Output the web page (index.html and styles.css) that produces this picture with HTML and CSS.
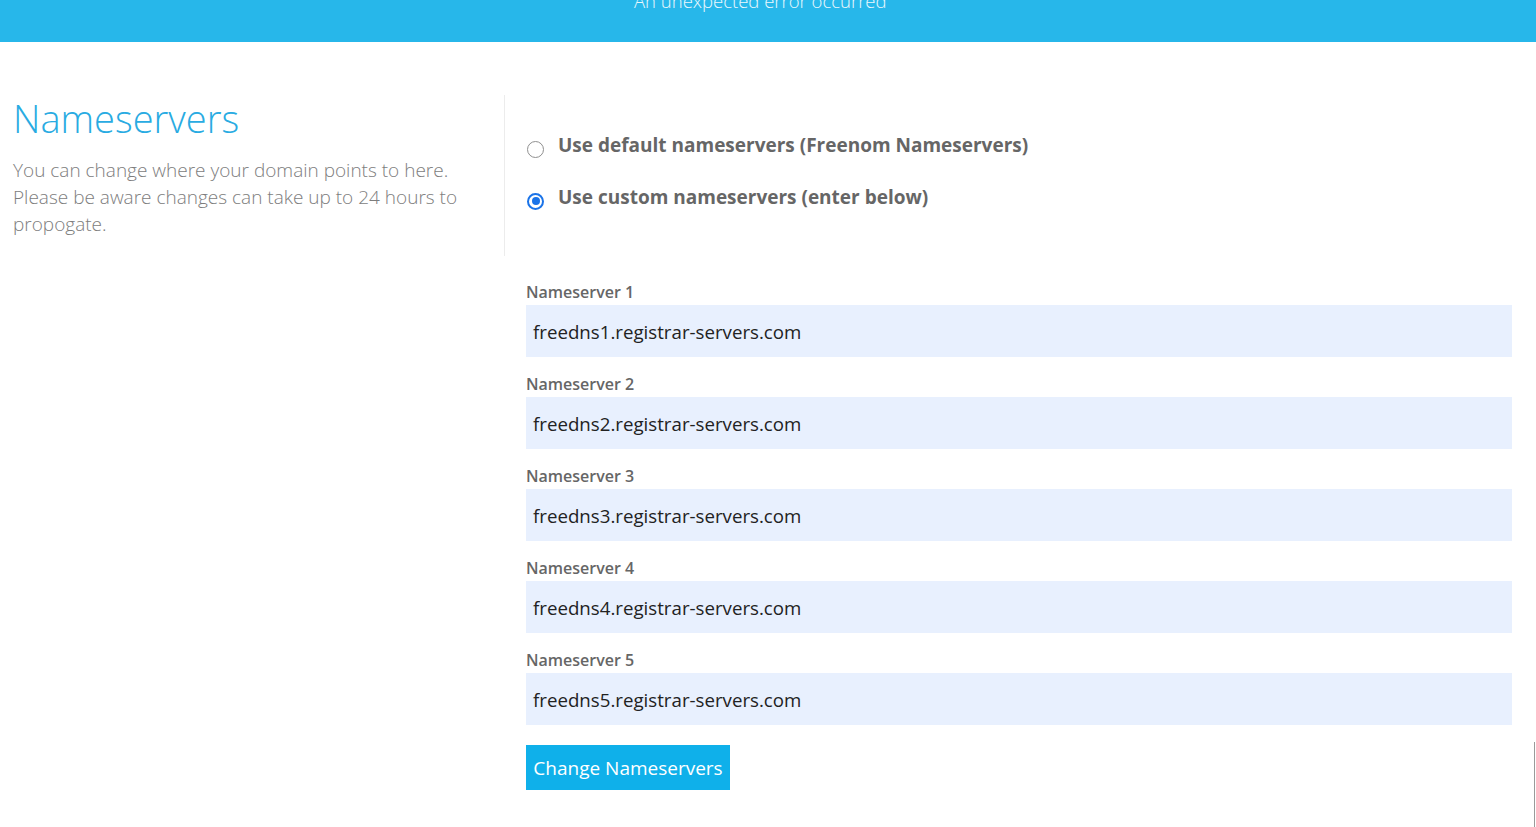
FILE: index.html
```html
<!DOCTYPE html>
<html>
<head>
<meta charset="utf-8">
<link rel="stylesheet" href="styles.css">
</head>
<body>
<div class="topbar"><span class="topbar-text">An unexpected error occurred</span></div>
<div class="main">
  <div class="left">
    <h1 class="title">Nameservers</h1>
    <p class="desc">You can change where your domain points to here. Please be aware changes can take up to 24 hours to propogate.</p>
  </div>
  <div class="right">
    <div class="radios">
      <label class="radio-row"><span class="radio"></span><span class="radio-label">Use default nameservers (Freenom Nameservers)</span></label>
      <label class="radio-row"><span class="radio checked"></span><span class="radio-label">Use custom nameservers (enter below)</span></label>
    </div>
    <div class="fields">
      <div class="field"><div class="field-label">Nameserver 1</div><div class="input">freedns1.registrar-servers.com</div></div>
      <div class="field"><div class="field-label">Nameserver 2</div><div class="input">freedns2.registrar-servers.com</div></div>
      <div class="field"><div class="field-label">Nameserver 3</div><div class="input">freedns3.registrar-servers.com</div></div>
      <div class="field"><div class="field-label">Nameserver 4</div><div class="input">freedns4.registrar-servers.com</div></div>
      <div class="field"><div class="field-label">Nameserver 5</div><div class="input">freedns5.registrar-servers.com</div></div>
    </div>
    <button class="btn">Change Nameservers</button>
  </div>
</div>
<div class="edge-line"></div>
</body>
</html>
```

FILE: styles.css
```css
html, body {
  margin: 0;
  padding: 0;
  background: #ffffff;
  font-family: "Open Sans", "Liberation Sans", sans-serif;
  overflow: hidden;
}
.topbar {
  height: 42px;
  background: #27b7ea;
  position: relative;
  overflow: hidden;
}
.topbar-text {
  position: absolute;
  left: 634px;
  top: -12px;
  color: #eaf7fd;
  font-weight: 300;
  font-size: 18.5px;
  line-height: 26px;
  white-space: nowrap;
}
.main {
  display: flex;
  padding-top: 53px;
  padding-left: 13px;
}
.left {
  width: 492px;
  box-sizing: border-box;
  border-right: 1px solid #ececec;
  height: 161px;
  padding-right: 30px;
}
.title {
  margin: 0;
  font-weight: 300;
  font-size: 38px;
  line-height: 44px;
  color: #29abe2;
  padding-top: 1px;
}
.desc {
  margin: 17px 0 0;
  font-weight: 300;
  font-size: 19px;
  line-height: 27px;
  color: #7d7d7d;
}
.right {
  flex: 1;
  padding-left: 21px;
  padding-right: 24px;
}
.radios {
  display: flex;
  flex-direction: column;
  gap: 27px;
  padding-top: 38px;
  padding-left: 1px;
}
.radio-row {
  display: flex;
  align-items: center;
  gap: 14px;
  height: 25px;
}
.radio {
  width: 17px;
  height: 17px;
  border: 1px solid #8f8f8f;
  border-radius: 50%;
  box-sizing: border-box;
  margin-top: 7px;
  background: #fff;
  position: relative;
}
.radio.checked {
  border: 2px solid #1a73e8;
}
.radio.checked::after {
  content: "";
  position: absolute;
  left: 2.5px;
  top: 2.5px;
  width: 8px;
  height: 8px;
  border-radius: 50%;
  background: #1a73e8;
}
.radio-label {
  font-weight: 700;
  font-size: 19px;
  color: #666666;
  line-height: 25px;
}
.fields {
  margin-top: 69px;
  display: flex;
  flex-direction: column;
  gap: 14px;
}
.field-label {
  font-weight: 600;
  font-size: 16px;
  line-height: 26px;
  color: #666666;
}
.input {
  height: 52px;
  background: #e8f0fe;
  display: flex;
  align-items: center;
  padding-left: 7px;
  font-size: 18.7px;
  color: #222222;
}
.btn {
  margin-top: 20px;
  height: 45px;
  width: 204px;
  border: none;
  background: #0fb0ea;
  color: #ffffff;
  font-family: "Open Sans", "Liberation Sans", sans-serif;
  font-size: 19px;
  padding: 0;
}
.edge-line {
  position: absolute;
  left: 1534px;
  top: 742px;
  width: 1px;
  height: 85px;
  background: #9a9a9a;
}
```
